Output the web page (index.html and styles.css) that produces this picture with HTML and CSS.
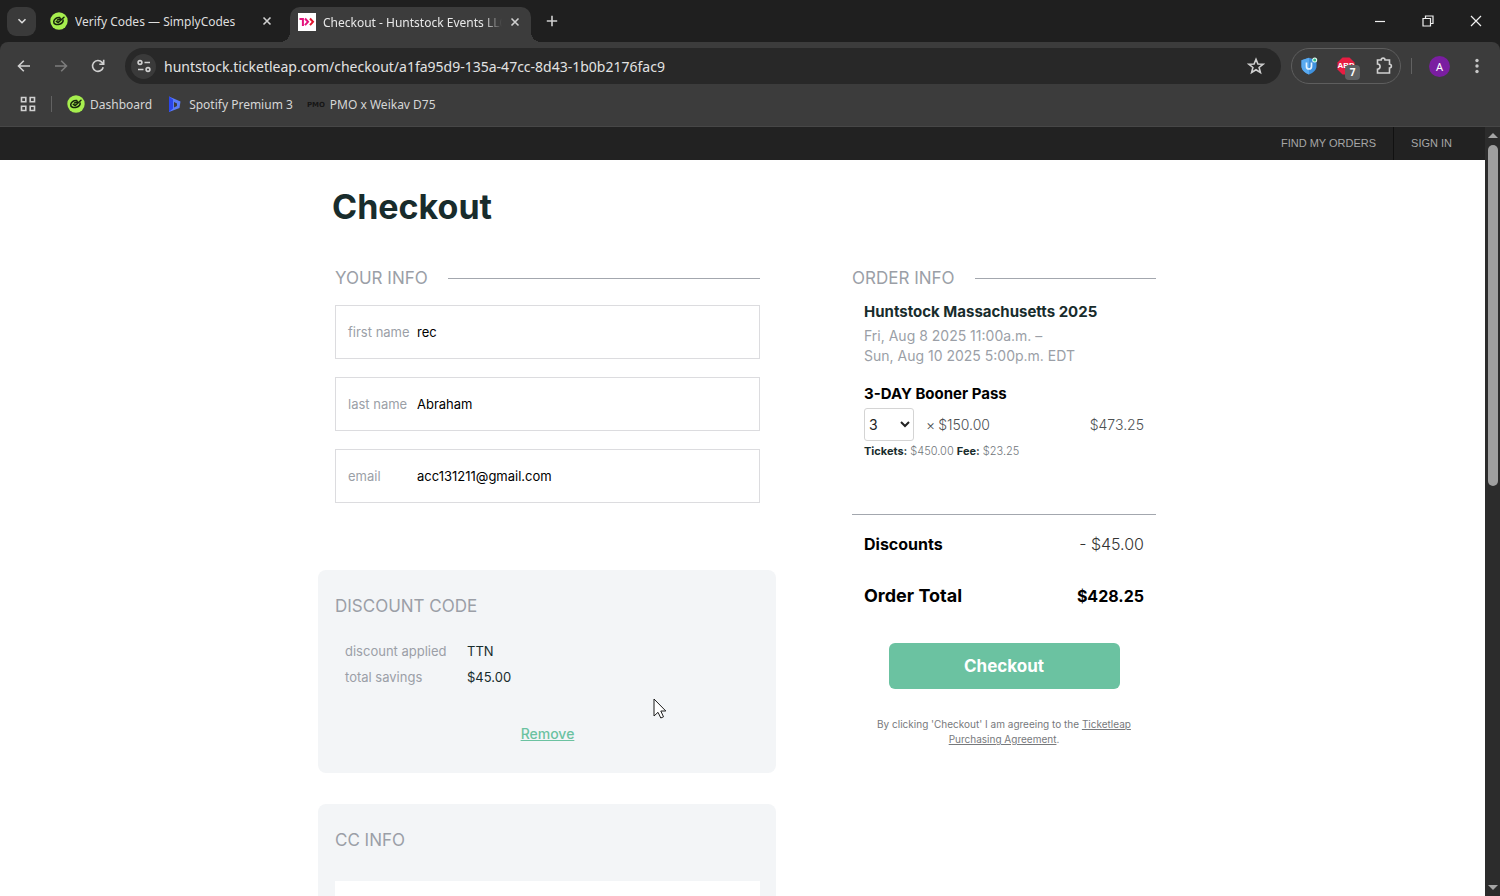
FILE: index.html
```html
<!DOCTYPE html>
<html lang="en">

<head>
    <meta charset="UTF-8">
    <title>Checkout - Huntstock Events LLC</title>
    <link rel="stylesheet" href="styles.css">
</head>

<body>
    <!-- shared logo -->
    <svg class="defs" aria-hidden="true">
        <symbol id="simply" viewBox="0 0 18 18">
            <circle cx="9" cy="9" r="8.7" fill="#a6ee4e" />
            <path d="M9.800 5.600C6.500 5.200 3.800 7.300 3.700 9.700c-.1 2.600 3 3.400 5.800 2.500 2.300-.7 3.800-2.200 3.600-4.200" fill="none" stroke="#16240c" stroke-width="1.500" stroke-linecap="round" />
            <path d="M6.300 9.300 8.200 10.500 14 5.200M7.500 8 10.500 6.700" fill="none" stroke="#16240c" stroke-width="1.500" stroke-linecap="round" />
        </symbol>
    </svg>

    <header class="browser">
        <div class="tabs">
            <button class="tab-search" aria-label="Search tabs">
                <svg width="10" height="10" viewBox="0 0 10 10"><path d="M1.500 3.200 5 6.700 8.500 3.200" /></svg>
            </button>
            <div class="tab">
                <svg class="logo" width="18" height="18"><use href="#simply" /></svg>
                <span class="tab-title">Verify Codes — SimplyCodes</span>
                <button class="icon-btn" aria-label="Close tab">
                    <svg width="10" height="10" viewBox="0 0 10 10"><path d="M1.500 1.500 8.500 8.500M8.500 1.500 1.500 8.500" /></svg>
                </button>
            </div>
            <div class="tab tab-active">
                <svg class="logo" width="18" height="18" viewBox="0 0 18 18">
                    <rect width="18" height="18" fill="#fff" />
                    <path d="M1.500 6h3.400v7" fill="none" stroke="#e5127d" stroke-width="2" />
                    <path d="M7 5.500 10 8.800 7 12.200" fill="none" stroke="#e5127d" stroke-width="2" />
                    <path d="M12 5.500 15 8.800 12 12.200" fill="none" stroke="#e0142c" stroke-width="2" />
                </svg>
                <span class="tab-title">Checkout - Huntstock Events LLC</span>
                <button class="icon-btn" aria-label="Close tab">
                    <svg width="10" height="10" viewBox="0 0 10 10"><path d="M1.500 1.500 8.500 8.500M8.500 1.500 1.500 8.500" /></svg>
                </button>
            </div>
            <button class="icon-btn new-tab" aria-label="New tab">
                <svg width="12" height="12" viewBox="0 0 12 12"><path d="M6 .8V11.200M.8 6H11.200" /></svg>
            </button>
            <div class="window-buttons">
                <button class="icon-btn" aria-label="Minimize">
                    <svg width="12" height="12" viewBox="0 0 12 12"><path d="M1 6.500H11" /></svg>
                </button>
                <button class="icon-btn" aria-label="Restore">
                    <svg width="12" height="12" viewBox="0 0 12 12"><path d="M1 3.500h7.500V11H1zM3.500 3.500V1H11V8.500H8.500" /></svg>
                </button>
                <button class="icon-btn" aria-label="Close">
                    <svg width="12" height="12" viewBox="0 0 12 12"><path d="M1 1 11 11M11 1 1 11" /></svg>
                </button>
            </div>
        </div>

        <div class="toolbar">
            <button class="icon-btn" aria-label="Back">
                <svg width="16" height="16" viewBox="0 0 16 16"><path d="M14 8H2.500M7.800 2.700 2.500 8 7.800 13.300" /></svg>
            </button>
            <button class="icon-btn dim" aria-label="Forward">
                <svg width="16" height="16" viewBox="0 0 16 16"><path d="M2 8H13.500M8.200 2.700 13.500 8 8.200 13.300" /></svg>
            </button>
            <button class="icon-btn" aria-label="Reload">
                <svg width="16" height="16" viewBox="0 0 16 16"><path d="M13.200 9.200A5.400 5.400 0 1 1 12 4.400L13.500 6M13.700 1.800V6.200H9.300" /></svg>
            </button>
            <div class="address">
                <button class="icon-btn site-info" aria-label="Site information">
                    <svg width="16" height="16" viewBox="0 0 16 16"><circle cx="4" cy="4.500" r="1.900" /><path d="M8.500 4.500H14M2 11.500H7.500" /><circle cx="12" cy="11.500" r="1.900" /></svg>
                </button>
                <input class="url" type="text" aria-label="Address" value="huntstock.ticketleap.com/checkout/a1fa95d9-135a-47cc-8d43-1b0b2176fac9">
                <button class="icon-btn" aria-label="Bookmark this page">
                    <svg width="18" height="18" viewBox="0 0 18 18"><path d="M9 2.300 10.900 7 16 7.300 12.100 10.500 13.400 15.400 9 12.700 4.600 15.400 5.900 10.500 2 7.300 7.100 7Z" /></svg>
                </button>
            </div>
            <div class="extensions">
                <button class="icon-btn" aria-label="Shield extension">
                    <svg class="logo" width="18" height="18" viewBox="0 0 18 18">
                        <path d="M9 .8 16.500 3.200V9c0 4-3 6.800-7.500 8.500C4.500 15.800 1.500 13 1.500 9V3.200Z" fill="#3f92df" />
                        <path d="M9 .8V17.500C4.500 15.800 1.500 13 1.500 9V3.200Z" fill="#5aaaf0" />
                        <path d="M6.500 5.500V9.500a2.500 2.500 0 0 0 5 0V5.500" fill="none" stroke="#e4f3ff" stroke-width="1.700" />
                        <circle cx="14.700" cy="3" r="2.500" fill="#e9fff6" />
                        <circle cx="14.700" cy="3" r="1.500" fill="#31b98a" />
                    </svg>
                </button>
                <button class="icon-btn adblock" aria-label="Adblock, 7 blocked">
                    <svg class="logo" width="18" height="18" viewBox="0 0 18 18">
                        <path d="M5.500.5h7l5 5v7l-5 5h-7l-5-5v-7Z" fill="#e81d42" />
                        <text x="9" y="11" text-anchor="middle" class="abp">ABP</text>
                    </svg>
                    <span class="badge">7</span>
                </button>
                <button class="icon-btn" aria-label="Extensions">
                    <svg width="20" height="20" viewBox="0 0 20 20"><path d="M3.500 4H7.200A1.900 1.900 0 0 1 11 4H15.500V8.200A1.900 1.900 0 0 1 15.500 12V17H3.500V13.200A2.600 2.600 0 0 0 3.500 8Z" /></svg>
                </button>
            </div>
            <span class="divider"></span>
            <button class="avatar" aria-label="Profile">A</button>
            <button class="icon-btn" aria-label="Menu">
                <svg class="logo dots" width="16" height="16" viewBox="0 0 16 16"><circle cx="8" cy="2.500" r="1.700" /><circle cx="8" cy="8" r="1.700" /><circle cx="8" cy="13.500" r="1.700" /></svg>
            </button>
        </div>

        <nav class="bookmarks">
            <button class="icon-btn" aria-label="Apps">
                <svg width="16" height="16" viewBox="0 0 16 16"><path d="M1.500 1.500h4.300v4.300H1.500zM10.200 1.500h4.300v4.300h-4.300zM1.500 10.200h4.300v4.300H1.500zM10.200 10.200h4.300v4.300h-4.300z" /></svg>
            </button>
            <span class="divider"></span>
            <a class="bookmark" href="#">
                <svg class="logo" width="18" height="18"><use href="#simply" /></svg>
                Dashboard
            </a>
            <a class="bookmark" href="#">
                <svg class="logo" width="18" height="18" viewBox="0 0 18 18">
                    <path d="M3 1.500 14.500 6.500 13.500 13 3 17Z" fill="#5b7cf7" />
                    <path d="M3 1.500 7 4.500V13.500L3 17Z" fill="#2b46ea" />
                    <path d="M8 7 11 8.500V11L8 12.500Z" fill="#3c3c3c" />
                </svg>
                Spotify Premium 3
            </a>
            <a class="bookmark" href="#">
                <svg class="logo" width="18" height="18" viewBox="0 0 18 18"><text x="9" y="12" text-anchor="middle" class="pmo">PMO</text></svg>
                PMO x Weikav D75
            </a>
        </nav>
    </header>

    <div class="viewport">
        <div class="page">
            <nav class="site-nav">
                <a href="#">FIND MY ORDERS</a>
                <a href="#">SIGN IN</a>
            </nav>

            <form class="checkout">
                <h1>Checkout</h1>
                <div class="columns">
                    <div class="main">
                        <section class="your-info">
                            <h2 class="ruled">YOUR INFO</h2>
                            <div class="field">
                                <label for="first-name">first name</label>
                                <input id="first-name" type="text" value="rec">
                            </div>
                            <div class="field">
                                <label for="last-name">last name</label>
                                <input id="last-name" type="text" value="Abraham">
                            </div>
                            <div class="field">
                                <label for="email">email</label>
                                <input id="email" type="email" value="acc131211@gmail.com">
                            </div>
                        </section>

                        <section class="panel">
                            <h2>DISCOUNT CODE</h2>
                            <dl class="discount">
                                <dt>discount applied</dt>
                                <dd>TTN</dd>
                                <dt>total savings</dt>
                                <dd>$45.00</dd>
                            </dl>
                            <a class="remove" href="#">Remove</a>
                        </section>

                        <section class="panel">
                            <h2>CC INFO</h2>
                            <div class="field">
                                <input type="text" aria-label="Card number">
                            </div>
                        </section>
                    </div>

                    <aside class="order">
                        <h2 class="ruled">ORDER INFO</h2>
                        <div class="order-body">
                            <h3 class="event">Huntstock Massachusetts 2025</h3>
                            <p class="dates">Fri, Aug 8 2025 11:00a.m. –<br>Sun, Aug 10 2025 5:00p.m. EDT</p>
                            <h3>3-DAY Booner Pass</h3>
                            <div class="line">
                                <select aria-label="Quantity">
                                    <option>1</option>
                                    <option>2</option>
                                    <option selected>3</option>
                                    <option>4</option>
                                </select>
                                <span class="times">×</span>
                                <span>$150.00</span>
                                <span class="amount">$473.25</span>
                            </div>
                            <p class="fees"><b>Tickets:</b> $450.00 <b>Fee:</b> $23.25</p>
                        </div>
                        <div class="totals">
                            <div class="total">
                                <span class="total-name">Discounts</span>
                                <span class="total-value">- $45.00</span>
                            </div>
                            <div class="total grand">
                                <span class="total-name">Order Total</span>
                                <span class="total-value">$428.25</span>
                            </div>
                        </div>
                        <button class="submit" type="button">Checkout</button>
                        <p class="terms">By clicking 'Checkout' I am agreeing to the <a href="#">Ticketleap Purchasing Agreement</a>.</p>
                    </aside>
                </div>
            </form>
        </div>

        <div class="scrollbar">
            <span class="arrow-up"></span>
            <span class="thumb"></span>
            <span class="arrow-down"></span>
        </div>
    </div>

    <svg class="pointer" width="14" height="21" viewBox="0 0 14 21">
        <path d="M1 1V18L5 14.300 7.800 20 10.500 18.800 7.800 13H12.800Z" fill="#fff" stroke="#1c1c1c" stroke-linejoin="round" />
    </svg>
</body>

</html>
```

FILE: styles.css
```css
* {
    box-sizing: border-box;
    margin: 0;
    padding: 0;
}

body {
    height: 100vh;
    display: flex;
    flex-direction: column;
    overflow: hidden;
    background-color: #fff;
    color: #000;
    font-family: Inter, "Liberation Sans", sans-serif;
    font-size: 14px;
}

button,
input,
select {
    font: inherit;
    color: inherit;
    border: none;
    background: none;
}

.defs {
    display: none;
}

svg {
    display: block;
    flex: none;
    fill: none;
    stroke: currentColor;
    stroke-width: 1.6;
}

svg.logo {
    stroke: none;
}

svg.dots {
    fill: #c7c7c7;
}

/* browser */

.browser {
    flex: none;
    background-color: #1f1f1f;
    color: #dedede;
    font-family: "Noto Sans", "Open Sans", sans-serif;
    font-size: 12px;
}

.tabs {
    height: 42px;
    display: flex;
    align-items: center;
    padding-left: 7px;
}

.icon-btn {
    display: flex;
    align-items: center;
    justify-content: center;
    flex: none;
    color: #d0d0d0;
}

.tab-search {
    width: 29px;
    height: 29px;
    display: flex;
    align-items: center;
    justify-content: center;
    border-radius: 9px;
    background-color: #3a3a3a;
    margin-right: 6px;
}

.tab {
    width: 241px;
    height: 35px;
    display: flex;
    align-items: center;
    gap: 7px;
    padding: 0 10px 0 8px;
}

.tab .icon-btn {
    width: 12px;
}

.tab-title {
    flex: 1;
    overflow: hidden;
    white-space: nowrap;
}

.tab:not(.tab-active) {
    margin-right: 7px;
}

.tab-active {
    position: relative;
    align-self: flex-end;
    padding-bottom: 5px;
    border-radius: 10px 10px 0 0;
    background-color: #3c3c3c;
    color: #e8e8e8;
}

.tab-active::before,
.tab-active::after {
    content: "";
    position: absolute;
    bottom: 0;
    width: 10px;
    height: 10px;
}

.tab-active::before {
    right: 100%;
    background: radial-gradient(circle at 0 0, transparent 10px, #3c3c3c 10px);
}

.tab-active::after {
    left: 100%;
    background: radial-gradient(circle at 100% 0, transparent 10px, #3c3c3c 10px);
}

.tab-active .tab-title {
    mask-image: linear-gradient(to right, #000 90%, transparent);
}

.new-tab {
    width: 42px;
}

.window-buttons {
    display: flex;
    margin-left: auto;
}

.window-buttons .icon-btn {
    width: 48px;
    color: #f0f0f0;
}

.window-buttons svg {
    stroke-width: 1.2;
}

.toolbar {
    height: 48px;
    display: flex;
    align-items: center;
    padding: 0 12px 0 8px;
    border-radius: 8px 8px 0 0;
    background-color: #3c3c3c;
}

.toolbar > .icon-btn {
    width: 32px;
    margin-right: 5px;
}

.toolbar > .icon-btn:last-child {
    width: 22px;
    margin: 0;
}

.toolbar .dim {
    color: #7c7c7c;
}

.address {
    flex: 1;
    height: 36px;
    display: flex;
    align-items: center;
    gap: 8px;
    margin: 0 10px 0 6px;
    padding: 0 16px 0 6px;
    border-radius: 18px;
    background-color: #282828;
}

.site-info {
    width: 25px;
    height: 25px;
    border-radius: 50%;
    background-color: #3a3a3a;
}

.url {
    flex: 1;
    min-width: 0;
    font-size: 14px;
    color: #e2e2e2;
    outline: none;
}

.extensions {
    width: 110px;
    height: 36px;
    display: flex;
    align-items: center;
    justify-content: space-between;
    padding: 0 6px 0 8px;
    border: 1px solid #5e5e5e;
    border-radius: 18px;
}

.adblock {
    position: relative;
}

.abp {
    font: bold 8px "Liberation Sans", sans-serif;
    fill: #fff;
}

.badge {
    position: absolute;
    left: 8px;
    top: 8px;
    width: 15px;
    height: 15px;
    border-radius: 4px;
    background-color: #5f6163;
    color: #fff;
    font-size: 10px;
    font-weight: bold;
    line-height: 15px;
}

.divider {
    width: 1px;
    height: 16px;
    background-color: #626262;
}

.toolbar .divider {
    margin: 0 17px 0 10px;
}

.avatar {
    width: 21px;
    height: 21px;
    margin-right: 16px;
    border-radius: 50%;
    background-color: #7a1ea1;
    color: #fff;
    font-size: 11px;
}

.bookmarks {
    height: 37px;
    display: flex;
    align-items: center;
    padding: 0 20px 8px;
    border-bottom: 1px solid #474747;
    background-color: #3c3c3c;
}

.bookmarks .divider {
    margin: 0 15px;
}

.bookmark {
    display: flex;
    align-items: center;
    gap: 5px;
    margin-right: 14px;
    color: #d6d6d6;
    text-decoration: none;
}

.pmo {
    font: bold 7px "DejaVu Sans", sans-serif;
    fill: #161616;
}

/* page */

.viewport {
    flex: 1;
    min-height: 0;
    display: flex;
}

.page {
    flex: 1;
    min-width: 0;
    overflow: hidden;
}

.site-nav {
    height: 33px;
    display: flex;
    align-items: center;
    justify-content: flex-end;
    padding-right: 16px;
    background-color: #222;
}

.site-nav a {
    padding: 0 17px;
    color: #a6a6a6;
    font-family: "Liberation Sans", Arial, sans-serif;
    font-size: 11px;
    line-height: 33px;
    text-decoration: none;
}

.site-nav a + a {
    border-left: 1px solid #111;
}

.checkout {
    max-width: 849px;
    margin: 0 auto;
    padding: 22px 11px 0 0;
}

h1 {
    padding-left: 14px;
    color: #182c2c;
    font-size: 34px;
    line-height: 50px;
}

.columns {
    display: flex;
    gap: 76px;
    align-items: flex-start;
    padding-top: 34px;
}

.main {
    flex: 1;
}

h2 {
    color: #9b9fa7;
    font-size: 17px;
    font-weight: 400;
    line-height: 24px;
}

.ruled {
    display: flex;
    align-items: center;
    gap: 20px;
}

.ruled::after {
    content: "";
    flex: 1;
    height: 1px;
    background-color: #a3a7ae;
}

.your-info {
    padding: 0 16px 49px 17px;
}

.field {
    height: 54px;
    display: flex;
    align-items: center;
    margin-bottom: 18px;
    padding: 0 12px;
    border: 1px solid #dcdcdf;
    background-color: #fff;
    font-size: 13px;
}

.ruled + .field {
    margin-top: 15px;
}

.field label {
    width: 69px;
    color: #9b9fa7;
}

.field input {
    flex: 1;
    min-width: 0;
    outline: none;
}

.panel {
    margin-bottom: 31px;
    padding: 24px 16px 27px 17px;
    border-radius: 8px;
    background-color: #f3f5f7;
}

.panel .field {
    margin-top: 29px;
    border-color: #fff;
}

.discount {
    display: grid;
    grid-template-columns: 122px 1fr;
    padding: 20px 10px 32px;
    font-size: 13px;
    line-height: 26px;
}

.discount dt {
    color: #9b9fa7;
}

.discount dd {
    color: #182c2c;
}

.remove {
    display: block;
    width: fit-content;
    margin: 0 auto;
    color: #6bc2a1;
    font-size: 14px;
    font-weight: 500;
    line-height: 24px;
}

.order {
    width: 304px;
}

.order-body {
    padding: 12px 12px 55px;
}

h3 {
    font-size: 15px;
    line-height: 20px;
}

.event {
    color: #182c2c;
}

.dates {
    margin: 4px 0 18px;
    color: #9b9fa7;
    line-height: 20px;
}

.line {
    display: flex;
    align-items: center;
    margin-top: 4px;
    color: #4c5052;
    font-weight: 300;
}

select {
    width: 50px;
    height: 33px;
    margin-right: 12px;
    border: 1px solid #d4d4d4;
    border-radius: 3px;
    background-color: #fff;
    color: #222;
    font-weight: 400;
}

.times {
    margin-right: 3px;
}

.amount {
    margin-left: auto;
}

.fees {
    margin-top: 2px;
    color: #70757a;
    font-size: 11px;
    font-weight: 300;
    line-height: 16px;
}

.fees b {
    color: #182c2c;
    font-weight: 700;
}

.totals {
    padding: 16px 12px 0;
    border-top: 1px solid #a3a7ae;
}

.total {
    display: flex;
    justify-content: space-between;
    margin-bottom: 26px;
    font-size: 16px;
    line-height: 26px;
}

.total-name {
    font-weight: 700;
}

.total-value {
    color: #333;
    font-weight: 300;
}

.grand .total-name {
    font-size: 18px;
}

.grand .total-value {
    color: #000;
    font-weight: 700;
}

.submit {
    display: block;
    width: 231px;
    height: 46px;
    margin: 34px auto 28px;
    border-radius: 6px;
    background-color: #6bc2a1;
    color: #fff;
    font-size: 17px;
    font-weight: 700;
}

.terms {
    padding: 0 20px;
    color: #77797c;
    font-size: 10px;
    line-height: 15px;
    text-align: center;
}

.terms a {
    color: inherit;
}

.scrollbar {
    width: 15px;
    display: flex;
    flex-direction: column;
    align-items: center;
    padding: 6px 0;
    background-color: #2c2c2c;
}

.arrow-up,
.arrow-down {
    border: 5px solid transparent;
}

.arrow-up {
    border-top: none;
    border-bottom: 5px solid #a5a5a5;
}

.arrow-down {
    margin-top: auto;
    border-bottom: none;
    border-top: 5px solid #a5a5a5;
}

.thumb {
    width: 10px;
    height: 45%;
    margin-top: 7px;
    border-radius: 5px;
    background-color: #9f9f9f;
}

.pointer {
    position: absolute;
    left: 653px;
    top: 698px;
    stroke-width: 1;
}
```
